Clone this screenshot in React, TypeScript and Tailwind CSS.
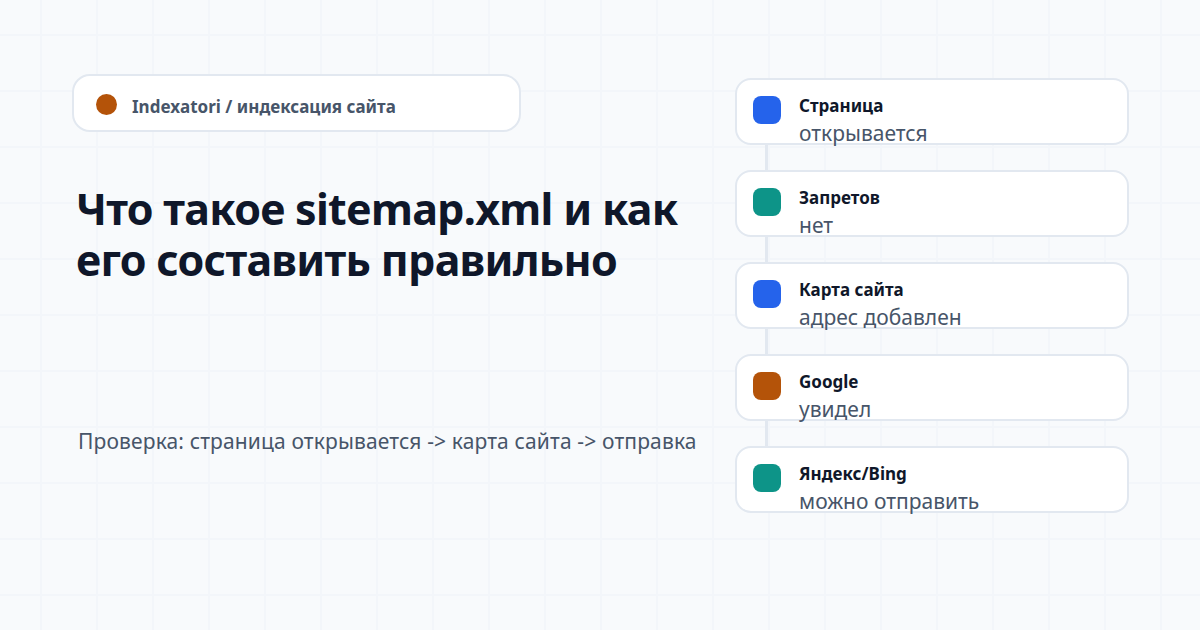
import React from 'react'

const steps = [
  { title: 'Страница', note: 'открывается', color: 'bg-[#2563eb]' },
  { title: 'Запретов', note: 'нет', color: 'bg-[#0d9488]' },
  { title: 'Карта сайта', note: 'адрес добавлен', color: 'bg-[#2563eb]' },
  { title: 'Google', note: 'увидел', color: 'bg-[#b45309]' },
  { title: 'Яндекс/Bing', note: 'можно отправить', color: 'bg-[#0d9488]' },
]

export default function App() {
  return (
    <div className="flex h-[630px] w-[1200px] overflow-hidden bg-[#f8fafc] bg-[linear-gradient(to_right,#f3f6fa_2px,transparent_2px),linear-gradient(to_bottom,#f3f6fa_2px,transparent_2px)] bg-[size:56px_56px] bg-[position:40px_34px] font-['Noto_Sans',sans-serif]">
      {/* left side */}
      <div className="flex w-[735px] flex-col pl-[72px] pt-[74px]">
        <div className="flex h-[58px] w-[449px] items-center gap-[15px] rounded-[18px] border-2 border-[#e2e8f0] bg-white pl-[22px]">
          <div className="mt-[3px] h-[21px] w-[21px] rounded-full bg-[#b45309]" />
          <span className="mt-[6px] text-[17px] font-bold leading-none text-[#475569]">Indexatori / индексация сайта</span>
        </div>
        <h1 className="ml-[4px] mt-[51px] whitespace-nowrap text-[43px] font-bold leading-[51px] tracking-[-0.7px] text-[#0f172a]">
          Что такое sitemap.xml и как
          <br />
          его составить правильно
        </h1>
        <p className="ml-[6px] mt-[142px] whitespace-nowrap text-[21px] leading-[28px] tracking-[0.14px] text-[#475569]">
          Проверка: страница открывается -&gt; карта сайта -&gt; отправка
        </p>
      </div>

      {/* right side */}
      <div className="flex w-[394px] flex-col pt-[78px]">
        {steps.map((step, index) => (
          <div key={index} className="flex flex-col">
            {index > 0 && <div className="ml-[30px] h-[25px] w-[3px] bg-[#e2e8f0]" />}
            <div className="flex h-[67px] items-start gap-[18px] rounded-[16px] border-2 border-[#e2e8f0] bg-white pl-[16px] pt-[16px]">
              <div className={`h-[28px] w-[28px] rounded-[8px] ${step.color}`} />
              <div className="-mt-[2px] flex flex-col">
                <span className="text-[17px] font-bold leading-[24px] text-[#0f172a]">{step.title}</span>
                <span className="mt-[2px] h-[26px] text-[21px] leading-[26px] text-[#475569]">{step.note}</span>
              </div>
            </div>
          </div>
        ))}
      </div>
    </div>
  )
}
